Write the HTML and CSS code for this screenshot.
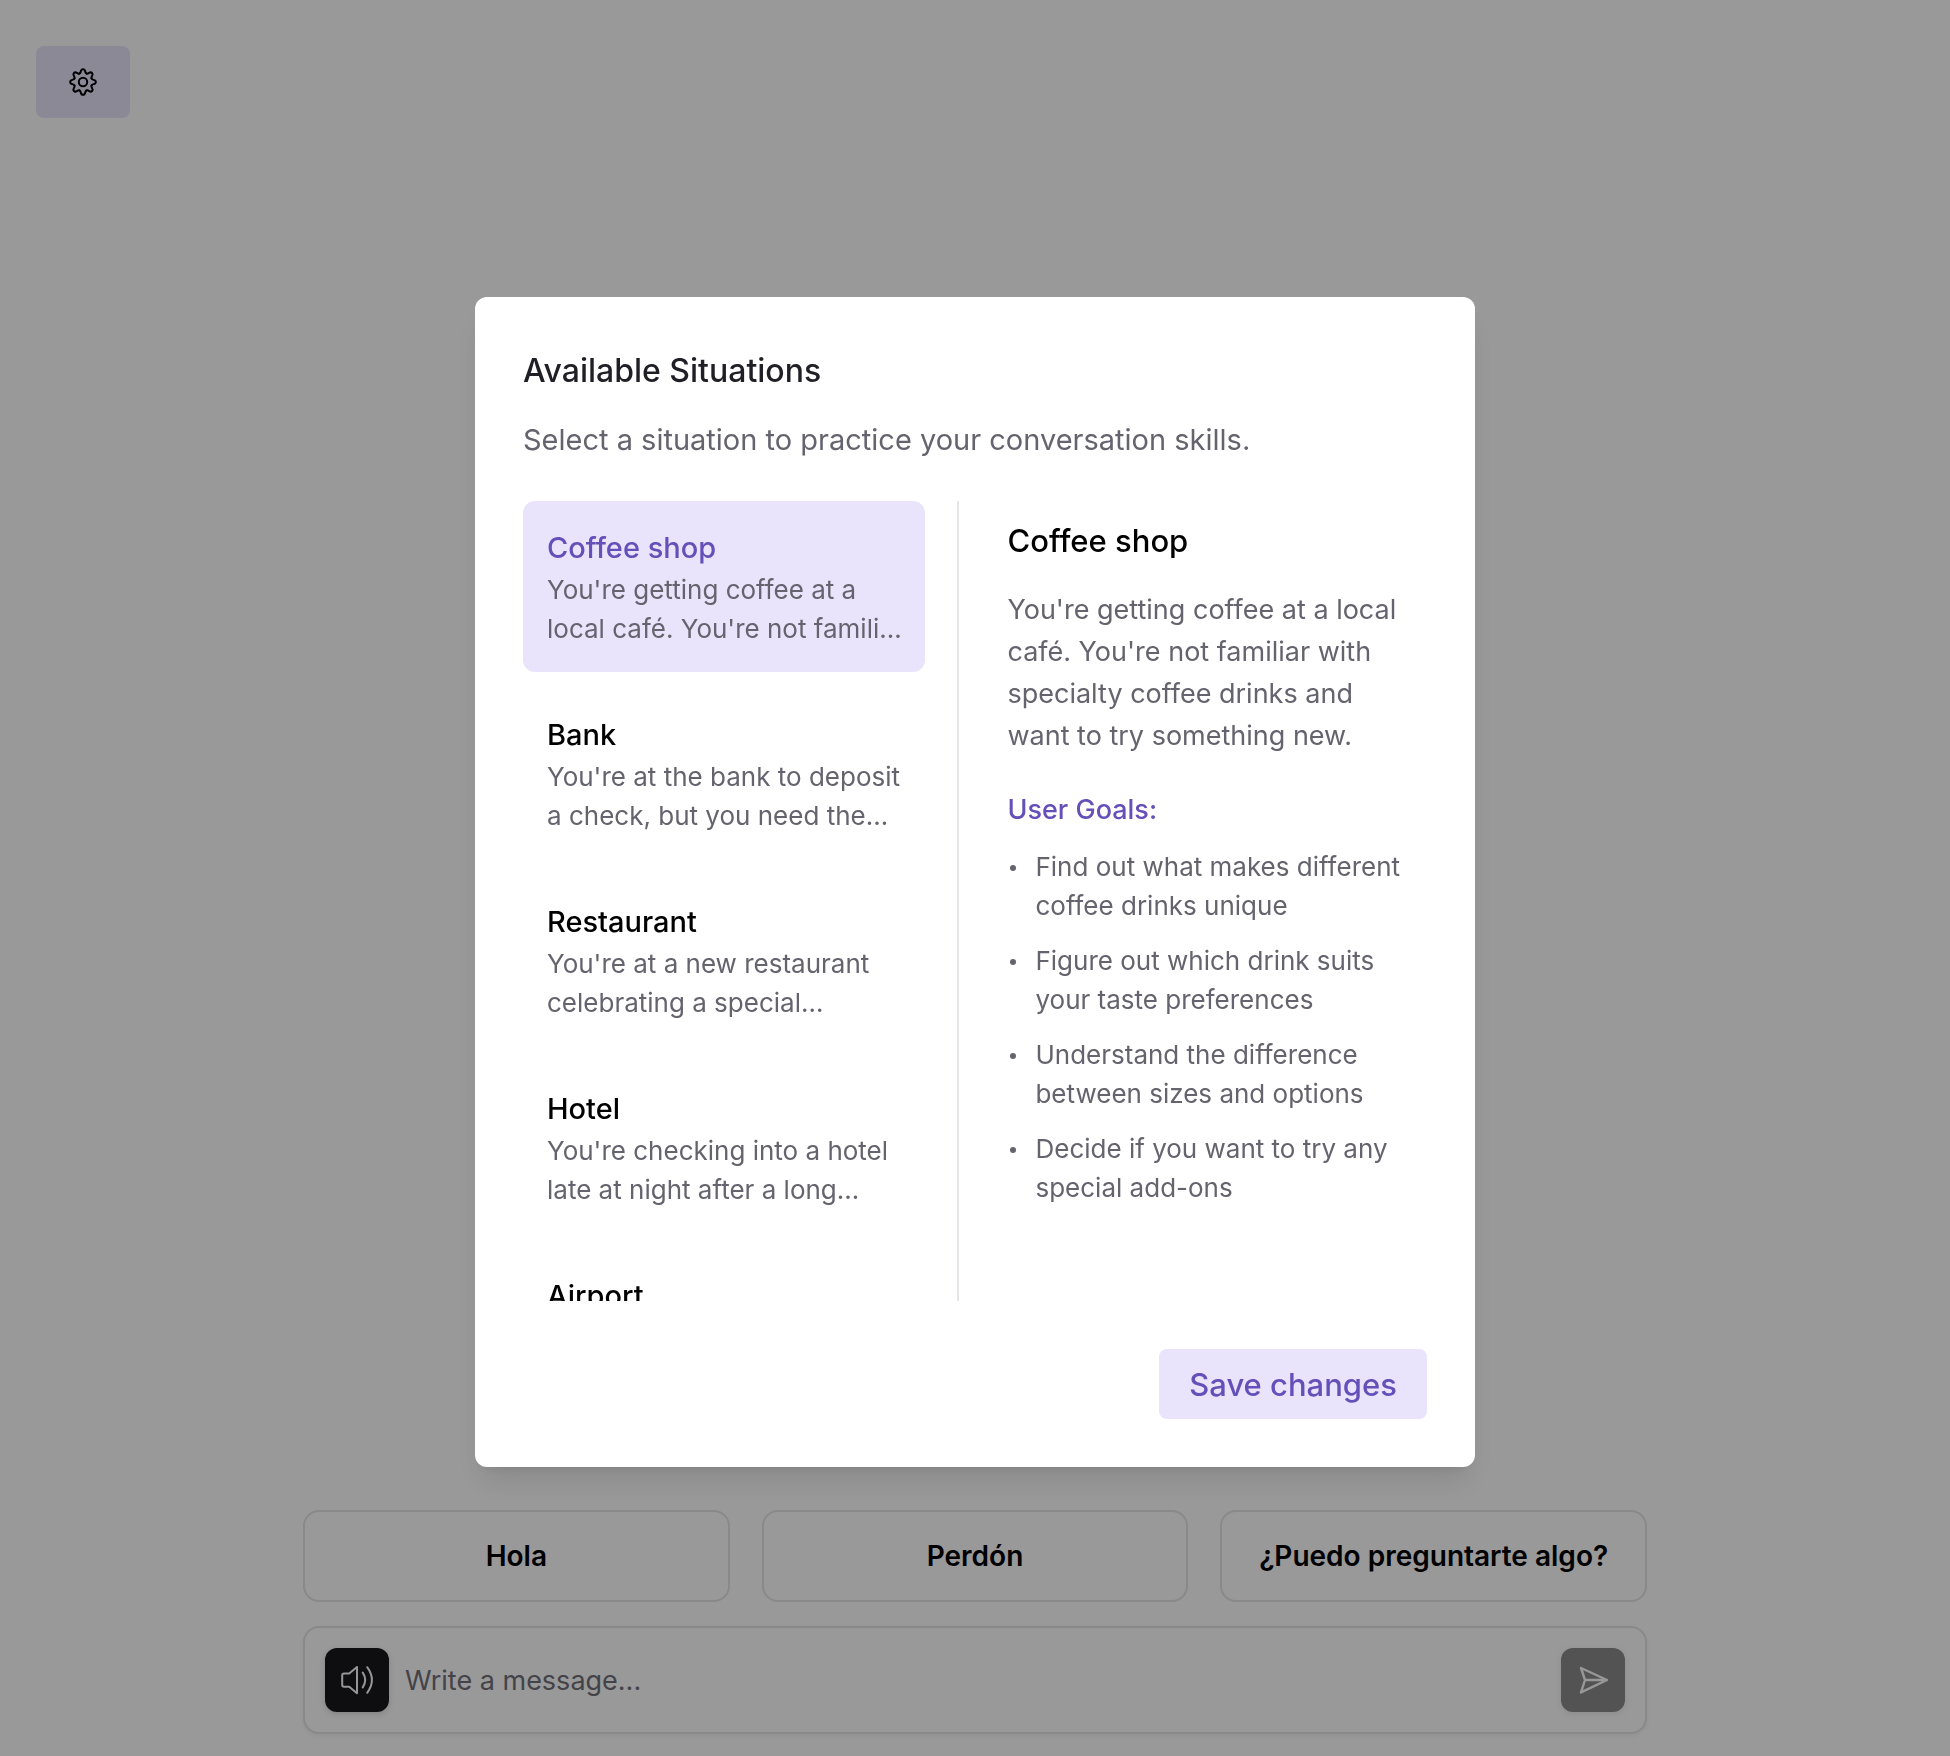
FILE: index.html
```html
<!DOCTYPE html>
<html lang="en">
<head>
<meta charset="utf-8">
<meta name="viewport" content="width=device-width, initial-scale=1">
<title>Conversation practice</title>
<link rel="stylesheet" href="styles.css">
</head>
<body>
<div class="page">
  <header class="topbar">
    <button class="settings" type="button" aria-label="Settings">
      <svg class="gear" viewBox="-14 -14 28 28" aria-hidden="true">
        <defs><path id="tooth" d="M8.5 3.520C9.4 1.3 12.8 3 12.8 0S9.4-1.3 8.5-3.520"/></defs>
        <use href="#tooth"/>
        <use href="#tooth" transform="rotate(45)"/>
        <use href="#tooth" transform="rotate(90)"/>
        <use href="#tooth" transform="rotate(135)"/>
        <use href="#tooth" transform="rotate(180)"/>
        <use href="#tooth" transform="rotate(225)"/>
        <use href="#tooth" transform="rotate(270)"/>
        <use href="#tooth" transform="rotate(315)"/>
        <circle r="4.2"/>
      </svg>
    </button>
  </header>
  <main class="chat">
    <div class="suggestions">
      <button class="suggestion" type="button">Hola</button>
      <button class="suggestion" type="button">Perdón</button>
      <button class="suggestion" type="button">¿Puedo preguntarte algo?</button>
    </div>
    <form class="composer">
      <button class="square" type="button" aria-label="Sound">
        <svg class="icon thin" viewBox="0 0 32 32" aria-hidden="true">
          <path d="M16 3v26.200L8.200 22.800H3Q1.200 22.800 1.200 21V11.200Q1.200 9.400 3 9.400H8.200Z"/>
          <path d="M21.800 8.600Q26.600 16 21.800 23.400M26.200 3.200Q35.600 16 26.200 28.800"/>
        </svg>
      </button>
      <input class="message" type="text" placeholder="Write a message..." aria-label="Message">
      <button class="square muted" type="submit" aria-label="Send">
        <svg class="icon" viewBox="0 0 32 32" aria-hidden="true">
          <path d="M4 4L30 16L4 28.400L8 16ZM8 16H30"/>
        </svg>
      </button>
    </form>
  </main>
</div>

<div class="overlay">
  <section class="dialog" role="dialog" aria-modal="true" aria-labelledby="dialog-title">
    <h2 class="dialog-title" id="dialog-title">Available Situations</h2>
    <p class="dialog-lead">Select a situation to practice your conversation skills.</p>
    <div class="columns">
      <div class="situations">
        <button class="situation selected" type="button">
          <span class="situation-name">Coffee shop</span>
          <span class="situation-text">You're getting coffee at a<br>local café. You're not famili…</span>
        </button>
        <button class="situation" type="button">
          <span class="situation-name">Bank</span>
          <span class="situation-text">You're at the bank to deposit<br>a check, but you need the…</span>
        </button>
        <button class="situation" type="button">
          <span class="situation-name">Restaurant</span>
          <span class="situation-text">You're at a new restaurant<br>celebrating a special…</span>
        </button>
        <button class="situation" type="button">
          <span class="situation-name">Hotel</span>
          <span class="situation-text">You're checking into a hotel<br>late at night after a long…</span>
        </button>
        <button class="situation" type="button">
          <span class="situation-name">Airport</span>
        </button>
      </div>
      <div class="details">
        <h3 class="details-title">Coffee shop</h3>
        <p class="details-text">You're getting coffee at a local<br>café. You're not familiar with<br>specialty coffee drinks and<br>want to try something new.</p>
        <h4 class="goals-title">User Goals:</h4>
        <ul class="goals">
          <li>Find out what makes different<br>coffee drinks unique</li>
          <li>Figure out which drink suits<br>your taste preferences</li>
          <li>Understand the difference<br>between sizes and options</li>
          <li>Decide if you want to try any<br>special add-ons</li>
        </ul>
      </div>
    </div>
    <div class="actions">
      <button class="save" type="button">Save changes</button>
    </div>
  </section>
</div>
</body>
</html>
```

FILE: styles.css
```css
* { box-sizing: border-box; }

body {
  margin: 0;
  background: #fff;
  color: #000;
  font-family: Inter, "Liberation Sans", sans-serif;
  font-variant-ligatures: none;
}

h2, h3, h4, p, ul { margin: 0; }

button {
  border: 0;
  padding: 0;
  font: inherit;
  font-variant-ligatures: none;
  color: inherit;
  cursor: pointer;
}

.page {
  min-height: 100vh;
  display: flex;
  flex-direction: column;
  justify-content: space-between;
  padding: 46px 36px 22px;
}

.settings {
  display: flex;
  align-items: center;
  justify-content: center;
  width: 94px;
  height: 72px;
  border-radius: 8px;
  background: #e9e4fc;
}

.gear {
  width: 28px;
  height: 28px;
  fill: none;
  stroke: #000;
  stroke-width: 2;
  stroke-linecap: round;
}

.chat {
  width: 100%;
  max-width: 1344px;
  margin: 0 auto;
  display: flex;
  flex-direction: column;
  gap: 24px;
}

.suggestions {
  display: grid;
  grid-template-columns: repeat(3, 1fr);
  gap: 32px;
}

.suggestion {
  height: 92px;
  border: 2px solid #e4e4e7;
  border-radius: 16px;
  background: #fff;
  font-size: 28px;
  font-weight: 600;
}

.composer {
  display: flex;
  align-items: center;
  gap: 16px;
  padding: 20px;
  border: 2px solid #e4e4e7;
  border-radius: 16px;
  background: #fff;
  box-shadow: 0 2px 4px rgba(0, 0, 0, 0.05);
}

.square {
  display: flex;
  align-items: center;
  justify-content: center;
  flex: none;
  width: 64px;
  height: 64px;
  border-radius: 12px;
  background: #18181b;
  box-shadow: 0 2px 6px rgba(0, 0, 0, 0.15);
}

.muted { opacity: 0.5; }

.icon {
  width: 32px;
  height: 32px;
  fill: none;
  stroke: #fafafa;
  stroke-width: 2.4;
  stroke-linecap: round;
  stroke-linejoin: round;
}

.thin { stroke-width: 2; }

.message {
  flex: 1;
  min-width: 0;
  height: 64px;
  padding: 0;
  border: 0;
  outline: 0;
  background: transparent;
  font: inherit;
  font-size: 27px;
}

.message::placeholder { color: #71717a; opacity: 1; }

.overlay {
  position: fixed;
  inset: 0;
  display: flex;
  align-items: center;
  justify-content: center;
  padding: 32px 24px 24px;
  background: rgba(0, 0, 0, 0.4);
}

.dialog {
  width: 100%;
  max-width: 1000px;
  padding: 48px;
  border-radius: 12px;
  background: #fff;
  box-shadow: 0 20px 30px -6px rgba(0, 0, 0, 0.1), 0 8px 12px -8px rgba(0, 0, 0, 0.1);
}

.dialog-title {
  font-size: 32px;
  line-height: 52px;
  font-weight: 500;
  color: #211f26;
}

.dialog-lead {
  margin: 16px 0 34px;
  font-size: 29px;
  line-height: 54px;
  color: #65636d;
}

.columns {
  display: grid;
  grid-template-columns: 6fr 7fr;
  gap: 32px;
  height: 800px;
}

.situations {
  display: flex;
  flex-direction: column;
  gap: 16px;
  min-height: 0;
  overflow: hidden;
}

.situation {
  flex: none;
  display: flex;
  flex-direction: column;
  padding: 24px;
  border-radius: 12px;
  background: transparent;
  text-align: left;
}

.situation-name {
  font-size: 29px;
  line-height: 45px;
  font-weight: 500;
}

.situation-text {
  font-size: 26px;
  line-height: 39px;
  color: #65636d;
  white-space: nowrap;
}

.selected { background: #e9e4fc; }

.selected .situation-name { color: #6550b9; }

.details {
  border-left: 2px solid #e4e4e9;
  padding: 16px 0 0 48px;
}

.details-title {
  font-size: 31px;
  line-height: 48px;
  font-weight: 500;
}

.details-text {
  margin: 24px 0 32px;
  font-size: 27px;
  line-height: 42px;
  color: #65636d;
  white-space: nowrap;
}

.goals-title {
  margin-bottom: 16px;
  font-size: 27px;
  line-height: 42px;
  font-weight: 500;
  color: #6550b9;
}

.goals {
  display: flex;
  flex-direction: column;
  gap: 16px;
  padding: 0;
  list-style: none;
  font-size: 26px;
  line-height: 39px;
  color: #65636d;
}

.goals li {
  display: grid;
  grid-template-columns: 28px 1fr;
  white-space: nowrap;
}

.goals li::before {
  content: "";
  width: 6px;
  height: 6px;
  margin: 18px 0 0 3px;
  border-radius: 50%;
  background: #65636d;
}

.actions {
  display: flex;
  justify-content: flex-end;
  margin-top: 48px;
}

.save {
  height: 70px;
  padding: 0 30px;
  border-radius: 8px;
  background: #e9e4fc;
  color: #6550b9;
  font-size: 31px;
  font-weight: 500;
}
```
